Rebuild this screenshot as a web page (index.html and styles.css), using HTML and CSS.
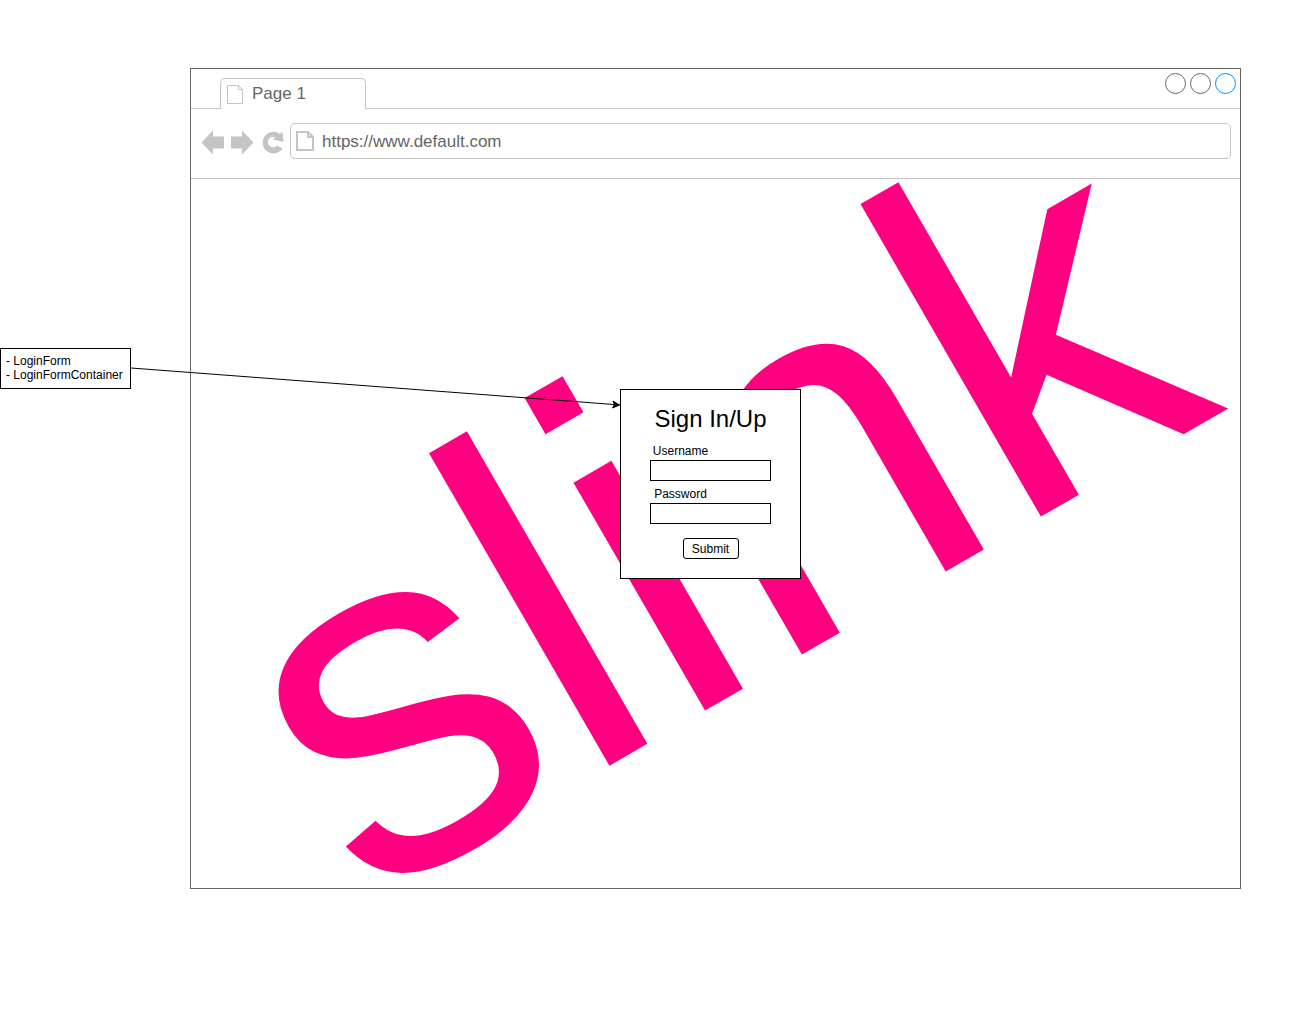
FILE: index.html
```html
<!DOCTYPE html>
<html lang="en">
<head>
<meta charset="utf-8">
<title>Login wireframe</title>
<link rel="stylesheet" href="styles.css">
</head>
<body>
<main class="canvas">
  <section class="browser">
    <header class="tab-strip">
      <div class="tab">
        <svg class="tab-icon" viewBox="0 0 16 19" width="16" height="19"><path d="M.5.5h11l4 4v14H.5zM11.5.5v4h4"/></svg>
        <span>Page 1</span>
      </div>
      <div class="controls">
        <span class="dot"></span><span class="dot"></span><span class="dot dot-active"></span>
      </div>
    </header>
    <div class="toolbar">
      <div class="nav">
        <svg viewBox="0 0 23 28" width="23" height="28"><path d="M.5 15.500 12 3.500v6h11v12H12v6z"/></svg>
        <svg viewBox="0 0 23 28" width="23" height="28"><path d="M22.500 15.500 11 3.500v6H0v12h11v6z"/></svg>
        <svg viewBox="0 0 23 28" width="23" height="28"><path d="M19 7 21.500 4.500 22.500 15 12 12.500 14.500 10.500A5.200 5.200 0 1 0 16 18.500L21.500 21.500A10.800 10.800 0 1 1 19 7z"/></svg>
      </div>
      <label class="address">
        <svg class="page-icon" viewBox="0 0 18 20" width="18" height="20"><path d="M1 1h11l5 5v13H1zM12 1v5h5"/></svg>
        <input class="address-input" type="text" value="https://www.default.com" aria-label="Address">
      </label>
    </div>
    <div class="viewport">
      <div class="wordmark">slink</div>
      <form class="card">
        <h1 class="card-title">Sign In/Up</h1>
        <label class="field-label" for="username">Username</label>
        <input class="field" id="username" type="text">
        <label class="field-label" for="password">Password</label>
        <input class="field" id="password" type="password">
        <button class="submit" type="button">Submit</button>
      </form>
    </div>
  </section>
  <aside class="note">- LoginForm<br>- LoginFormContainer</aside>
  <svg class="connector" height="38">
    <line x1="0" y1="0" x2="100%" y2="37"/>
    <svg x="100%" y="37" overflow="visible"><path d="M-1 0-8 3-6-.500-7.500-4z"/></svg>
  </svg>
</main>
</body>
</html>
```
FILE: styles.css
```css
* { box-sizing: border-box; }

body {
  margin: 0;
  background: #fff;
  color: #000;
  font: 12px/14px "Liberation Sans", Arial, sans-serif;
}

.canvas {
  position: relative;
  min-height: 100vh;
  padding: 68px 54px 100px 190px;
}

.browser {
  border: 1px solid #666;
}

.tab-strip {
  display: flex;
  justify-content: space-between;
  align-items: flex-end;
  height: 40px;
  padding: 0 4px 0 29px;
  border-bottom: 1px solid #c4c4c4;
}

.tab {
  display: flex;
  align-items: center;
  gap: 9px;
  width: 146px;
  height: 31px;
  margin-bottom: -1px;
  padding: 0 6px;
  border: 1px solid #c4c4c4;
  border-bottom: 0;
  border-radius: 5px 5px 0 0;
  background: #fff;
  color: #666;
  font-size: 17px;
  line-height: 20px;
}

.tab-icon,
.page-icon {
  flex: none;
  fill: none;
  stroke: #c4c4c4;
}

.page-icon { stroke-width: 2; }

.controls {
  display: flex;
  gap: 4px;
  align-self: flex-start;
  padding-top: 4px;
}

.dot {
  width: 21px;
  height: 21px;
  border: 1px solid #666;
  border-radius: 50%;
}

.dot-active { border-color: #008cff; }

.toolbar {
  display: flex;
  align-items: center;
  gap: 6px;
  height: 70px;
  padding: 0 9px 5px 10px;
  border-bottom: 1px solid #c4c4c4;
}

.nav {
  display: flex;
  flex: none;
  gap: 7px;
  fill: #c4c4c4;
}

.address {
  display: flex;
  flex: 1;
  align-items: center;
  gap: 8px;
  height: 36px;
  padding: 0 5px;
  border: 1px solid #c4c4c4;
  border-radius: 5px;
}

.address-input {
  flex: 1;
  min-width: 0;
  height: 22px;
  padding: 2px 0 0;
  border: 0;
  outline: 0;
  background: none;
  color: #666;
  font: 17px/20px "Liberation Sans", Arial, sans-serif;
}

.viewport {
  display: grid;
  grid-template-columns: minmax(0, 1fr);
  justify-items: center;
  min-height: 709px;
  padding: 0 10px 50px 0;
}

.wordmark,
.card { grid-area: 1 / 1; }

.wordmark {
  align-self: center;
  color: #ff0080;
  font-size: 498px;
  line-height: 600px;
  white-space: nowrap;
  transform: rotate(-30deg);
}

.card {
  z-index: 1;
  display: flex;
  flex-direction: column;
  align-self: start;
  width: 181px;
  margin-top: 210px;
  padding: 15px 29px 19px;
  border: 1px solid #000;
  background: #fff;
}

.card-title {
  margin: 0 0 11px;
  font-size: 24px;
  font-weight: 400;
  line-height: 28px;
  text-align: center;
}

.field-label {
  width: 61px;
  margin-bottom: 2px;
  text-align: center;
}

.field {
  width: 100%;
  height: 21px;
  margin: 0 0 6px;
  padding: 0 4px;
  border: 1px solid #000;
  background: #fff;
}

.submit {
  align-self: center;
  width: 56px;
  height: 21px;
  margin-top: 8px;
  padding: 0;
  border: 1px solid #000;
  border-radius: 3px;
  background: #fff;
  color: #000;
  font: inherit;
}

.note {
  position: absolute;
  top: 348px;
  left: 0;
  width: 131px;
  padding: 5px 5px 6px;
  border: 1px solid #000;
  background: #fff;
}

.connector {
  position: absolute;
  z-index: 2;
  top: 368px;
  left: 131px;
  width: calc(50% - 158px);
  overflow: visible;
  fill: #000;
  stroke: #000;
  pointer-events: none;
}
```
